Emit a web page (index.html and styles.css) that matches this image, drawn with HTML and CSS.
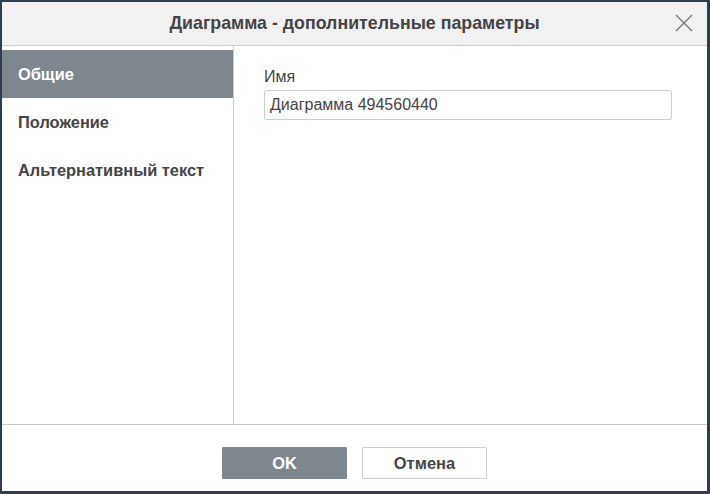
FILE: index.html
```html
<!DOCTYPE html>
<html lang="ru">
<head>
<meta charset="utf-8">
<link rel="stylesheet" href="styles.css">
</head>
<body>
<div class="dialog">
  <div class="header">
    <div class="title">Диаграмма - дополнительные параметры</div>
    <div class="close">
      <svg width="18" height="18" viewBox="0 0 18 18"><path d="M1 1L17 17M17 1L1 17" stroke="#7a7a7a" stroke-width="1.4" fill="none"/></svg>
    </div>
  </div>
  <div class="body">
    <div class="sidebar">
      <div class="item active">Общие</div>
      <div class="item">Положение</div>
      <div class="item">Альтернативный текст</div>
    </div>
    <div class="content">
      <div class="label">Имя</div>
      <div class="input">Диаграмма 494560440</div>
    </div>
  </div>
  <div class="footer">
    <div class="btn primary">OK</div>
    <div class="btn">Отмена</div>
  </div>
</div>
</body>
</html>
```
FILE: styles.css
```css
html, body {
  margin: 0;
  padding: 0;
  width: 710px;
  height: 494px;
  background: #2e3d4f;
  overflow: hidden;
}
.dialog {
  margin: 2px 3px 3px 2px;
  width: 705px;
  height: 489px;
  background: #fff;
  display: flex;
  flex-direction: column;
  font-family: "Liberation Sans", Arial, sans-serif;
  color: #444;
}
.header {
  height: 43px;
  background: #f1f1f1;
  border-bottom: 1px solid #cbcbcb;
  display: flex;
  align-items: center;
  justify-content: center;
  position: relative;
  flex: none;
}
.title {
  font-size: 17.8px;
  font-weight: bold;
  color: #444;
}
.close {
  position: absolute;
  right: 14px;
  top: 12px;
  width: 18px;
  height: 18px;
}
.body {
  flex: 1;
  display: flex;
  min-height: 0;
}
.sidebar {
  width: 231px;
  border-right: 1px solid #cbcbcb;
  padding-top: 4px;
  flex: none;
}
.item {
  height: 48px;
  line-height: 48px;
  padding-left: 16px;
  font-size: 16.4px;
  font-weight: bold;
  color: #444;
}
.item.active {
  background: #7e868e;
  color: #fff;
}
.content {
  flex: 1;
  padding: 22px 33px 0 30px;
}
.label {
  font-size: 16px;
  line-height: 18px;
  color: #444;
  margin-bottom: 4px;
}
.input {
  width: 401px;
  height: 28px;
  border: 1px solid #cfcfcf;
  border-radius: 2px;
  box-sizing: content-box;
  font-size: 16px;
  line-height: 28px;
  padding-left: 5px;
  color: #444;
}
.footer {
  height: 67px;
  border-top: 1px solid #cbcbcb;
  display: flex;
  justify-content: center;
  align-items: flex-start;
  gap: 15px;
  padding-top: 22px;
  box-sizing: border-box;
  flex: none;
}
.btn {
  width: 123px;
  height: 30px;
  border: 1px solid #cfcfcf;
  border-radius: 1px;
  line-height: 30px;
  text-align: center;
  font-size: 16.5px;
  font-weight: bold;
  color: #444;
  background: #fff;
}
.btn.primary {
  background: #7e868e;
  border-color: #7e868e;
  color: #fff;
}
```
